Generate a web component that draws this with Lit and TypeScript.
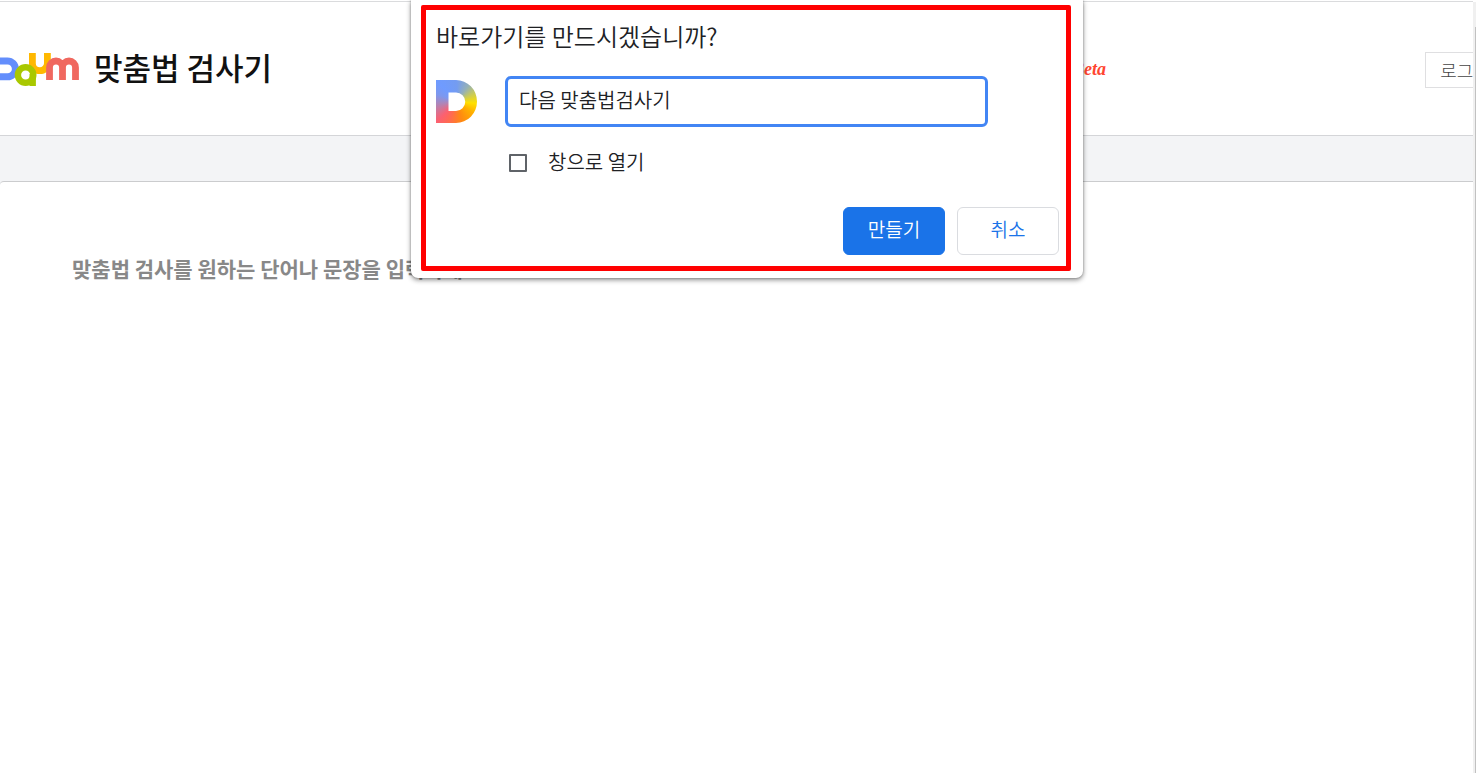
import { LitElement, html, css, svg } from "lit";
import { customElement } from "lit/decorators.js";

@customElement("daum-logo")
class DaumLogo extends LitElement {
  static styles = css`
    :host { display: block; flex: none; }
    svg { display: block; }
  `;
  render() {
    return html`<svg width="80" height="36" viewBox="0 52 80 36" role="img" aria-label="Daum">
      ${svg`
        <path d="M-4 61H7.5A7.9 7.9 0 0 1 7.5 76.8H-4" fill="none" stroke="#638efc" stroke-width="7"/>
        <path d="M32.4 53V63.2A7.5 7.5 0 0 0 47.4 63.2V53" fill="none" stroke="#ffb800" stroke-width="6.8"/>
        <circle cx="25.6" cy="75" r="7.7" fill="none" stroke="#a9c800" stroke-width="6.4"/>
        <path d="M32.7 74V86" fill="none" stroke="#a9c800" stroke-width="6.4"/>
        <path d="M49.5 80V67.5A6.5 6.5 0 0 1 62.5 67.5V80M62.5 67.5A6.5 6.5 0 0 1 75.5 67.5V80" fill="none" stroke="#f0685f" stroke-width="6.8"/>
      `}
    </svg>`;
  }
}

@customElement("shortcut-dialog")
class ShortcutDialog extends LitElement {
  static styles = css`
    :host {
      display: block;
      box-sizing: border-box;
      width: 672px;
      padding: 5px 12px 7px 10px;
      background: #fff;
      border-radius: 0 0 7px 7px;
      box-shadow: 0 2px 5px rgba(0, 0, 0, 0.45), 0 0 2px rgba(0, 0, 0, 0.3);
      font-family: "Noto Sans CJK KR", sans-serif;
      font-weight: 350;
      color: #202124;
    }
    .frame {
      border: 5px solid #f00;
      border-radius: 2px;
      padding: 8px 7px 11px 10px;
    }
    h1 { margin: 0 0 22px; font-size: 24px; line-height: 36px; font-weight: inherit; }
    .name { display: flex; align-items: center; gap: 27px; }
    .icon {
      flex: none;
      width: 42px;
      height: 43px;
      background: conic-gradient(from 0deg at 50% 50%, #749cf0 0deg, #94b0b8 35deg, #c4c860 62deg, #ffe000 96deg, #ffb000 125deg, #ff8a10 165deg, #ff6c4c 200deg, #fc6070 225deg, #b384b4 260deg, #7d98ee 290deg, #6f9bff 315deg, #749cf0 360deg);
      clip-path: path(evenodd, "M0 0H20A21 21.5 0 0 1 20 43H0ZM12.5 12.5V31H20A9.2 9.2 0 0 0 20 12.5Z");
    }
    .field {
      box-sizing: border-box;
      width: 483px;
      height: 51px;
      border: 3px solid #4285f4;
      border-radius: 6px;
      padding: 0 11px 4px;
      font: inherit;
      font-size: 20px;
      color: inherit;
      outline: none;
    }
    .option {
      display: flex;
      align-items: center;
      gap: 21px;
      margin: 22px 0 30px 73px;
      font-size: 20px;
      line-height: 28px;
      width: max-content;
    }
    .option span { line-height: 26px; padding-bottom: 2px; }
    .box {
      appearance: none;
      box-sizing: border-box;
      width: 18px;
      height: 18px;
      margin: 0;
      border: 2px solid #5f6368;
      border-radius: 1px;
    }
    .actions { display: flex; justify-content: flex-end; gap: 12px; }
    button {
      box-sizing: border-box;
      width: 102px;
      height: 48px;
      padding: 0 0 6px;
      border: 1px solid #dadce0;
      border-radius: 6px;
      background: #fff;
      color: #1a73e8;
      font: inherit;
      font-size: 19px;
    }
    .primary { background: #1a73e8; border-color: #1a73e8; color: #fff; }
  `;
  render() {
    return html`<form class="frame" @submit=${(e: Event) => e.preventDefault()}>
      <h1>바로가기를 만드시겠습니까?</h1>
      <div class="name">
        <span class="icon"></span>
        <input class="field" type="text" aria-label="바로가기 이름" .value=${"다음 맞춤법검사기"} />
      </div>
      <label class="option"><input class="box" type="checkbox" /><span>창으로 열기</span></label>
      <div class="actions">
        <button class="primary" type="submit">만들기</button>
        <button type="button">취소</button>
      </div>
    </form>`;
  }
}

@customElement("app-root")
class AppRoot extends LitElement {
  static styles = css`
    :host {
      display: flex;
      position: relative;
      box-sizing: border-box;
      min-height: 100vh;
      padding-top: 1px;
      overflow: hidden;
      background: #fff;
      font-family: "Noto Sans CJK KR", sans-serif;
    }
    .page {
      flex: 1;
      min-width: 0;
      display: flex;
      flex-direction: column;
      overflow: hidden;
      border-top: 1px solid #dadbdd;
    }
    header {
      display: flex;
      align-items: center;
      flex: none;
      box-sizing: border-box;
      height: 134px;
      padding-top: 3px;
      border-bottom: 1px solid #d4d5d8;
    }
    .brand {
      display: flex;
      align-items: center;
      gap: 14px;
      color: #111;
      text-decoration: none;
      white-space: nowrap;
    }
    .title { padding-bottom: 6px; font-size: 31px; line-height: 40px; font-weight: 500; }
    .beta {
      margin-left: auto;
      margin-right: 319px;
      padding-bottom: 2px;
      font: italic bold 18px/24px "Liberation Serif", serif;
      color: #ff4530;
    }
    .login {
      flex: none;
      box-sizing: border-box;
      width: 80px;
      height: 36px;
      margin-right: -32px;
      padding: 0;
      border: 1px solid #dfdfe1;
      background: #fff;
      color: #444;
      font: inherit;
      font-size: 18px;
      font-weight: 300;
    }
    main { flex: 1; display: flex; padding-top: 45px; background: #f3f4f6; }
    .editor {
      flex: 1;
      box-sizing: border-box;
      border: 0;
      border-top: 1px solid #cbccce;
      border-radius: 4px 0 0 0;
      padding: 71px 72px;
      resize: none;
      outline: none;
      background: #fff;
      font: inherit;
      font-size: 21px;
      line-height: 30px;
      font-weight: 700;
    }
    .editor::placeholder { color: #888; opacity: 1; }
    .scrollbar {
      flex: none;
      display: flex;
      justify-content: flex-end;
      width: 3px;
      margin-top: 1px;
      padding-top: 25px;
      box-sizing: border-box;
      background: #f0f0f0;
    }
    .thumb { width: 1px; background: #c1c1c1; }
    .dialog { position: absolute; top: 0; left: calc(50% - 327px); }
  `;
  render() {
    return html`
      <div class="page">
        <header>
          <a class="brand" href="#"><daum-logo></daum-logo><span class="title">맞춤법 검사기</span></a>
          <span class="beta">Beta</span>
          <button class="login" type="button">로그인</button>
        </header>
        <main>
          <textarea class="editor" aria-label="맞춤법 검사" placeholder="맞춤법 검사를 원하는 단어나 문장을 입력하세요."></textarea>
        </main>
      </div>
      <div class="scrollbar"><div class="thumb"></div></div>
      <shortcut-dialog class="dialog" role="dialog" aria-label="바로가기 만들기"></shortcut-dialog>
    `;
  }
}
